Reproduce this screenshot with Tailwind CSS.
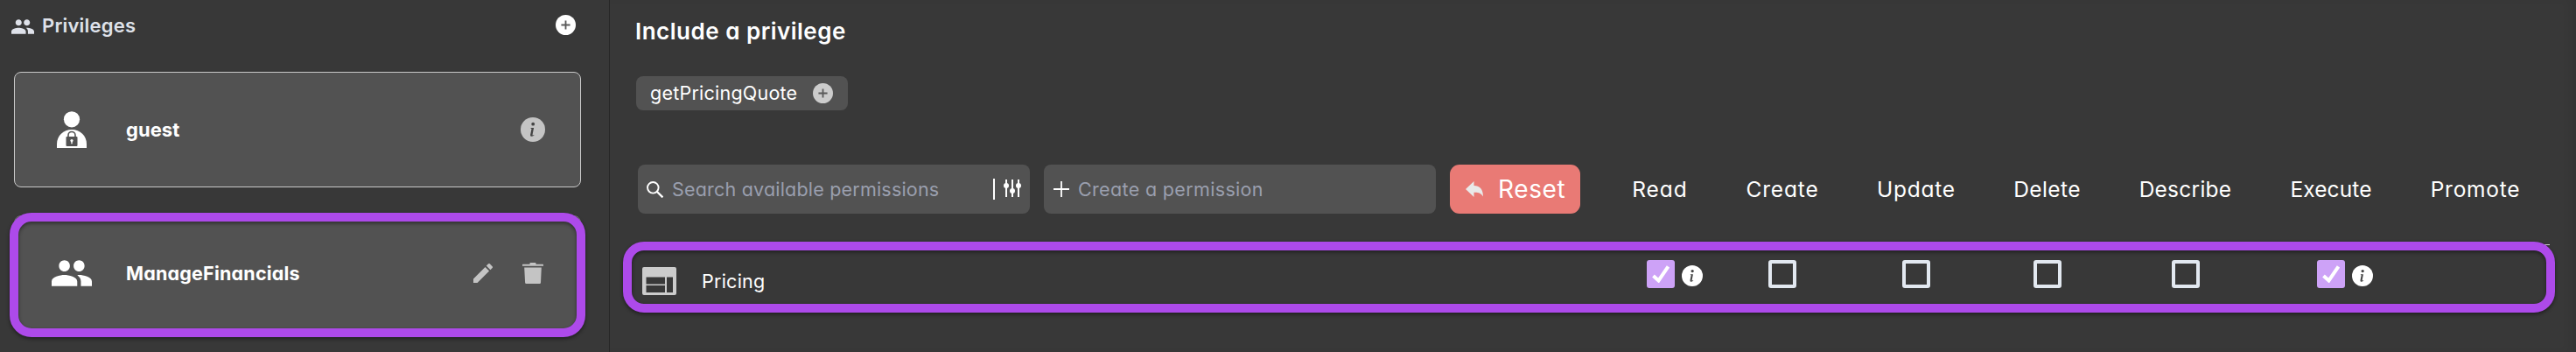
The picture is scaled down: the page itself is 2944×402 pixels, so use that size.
<!DOCTYPE html>
<html lang="en">
<head>
<meta charset="utf-8">
<title>Privileges</title>
<script src="https://cdn.jsdelivr.net/npm/@tailwindcss/browser@4"></script>
</head>
<body class="bg-[#383838] text-white font-['Inter',sans-serif] [font-feature-settings:'cv11'] whitespace-nowrap">
<svg class="hidden">
  <symbol id="people" viewBox="1 5 22 14"><path fill="currentColor" d="M16 11c1.66 0 2.99-1.34 2.99-3S17.66 5 16 5s-3 1.34-3 3 1.34 3 3 3zm-8 0c1.66 0 2.99-1.34 2.99-3S9.66 5 8 5 5 6.340 5 8s1.340 3 3 3zm0 2c-2.330 0-7 1.170-7 3.500V19h14v-2.500c0-2.330-4.670-3.500-7-3.500zm8 0c-.290 0-.620.020-.970.050 1.160.840 1.970 1.970 1.970 3.450V19h6v-2.500c0-2.330-4.670-3.500-7-3.500z"/></symbol>
  <symbol id="plus-circle" viewBox="0 0 24 24"><circle cx="12" cy="12" r="12" fill="currentColor"/><path d="M12 6.700v10.600M6.700 12h10.600" stroke="#5a5a5a" stroke-width="1.900"/></symbol>
  <symbol id="info" viewBox="0 0 28 28"><circle cx="14" cy="14" r="14" fill="currentColor"/><circle cx="14.200" cy="7.700" r="1.900" fill="#444"/><path d="M11.600 11.900h3.500l-1.500 7.600q-.2 1.100.5.900l1.200-.5v.8q-1.700 1.200-3.200 1.100-1.300-.2-1-1.900l1.400-6.900-1-.3z" fill="#444"/></symbol>
</svg>
<div class="flex h-[402px] w-[2944px] overflow-hidden">
  <aside class="w-[697px] shrink-0 border-r border-[#272727] pl-4">
    <header class="flex h-14 items-center pr-[38px]">
      <svg class="-ml-[3px] mt-[5px] h-[17px] w-[26px] text-[#dfe2ea]" preserveAspectRatio="none"><use href="#people"/></svg>
      <h2 class="ml-[9px] mt-[3px] text-[22px] font-semibold tracking-[0.200px] text-[#dfe2ea]">Privileges</h2>
      <svg class="ml-auto size-[23px]"><use href="#plus-circle"/></svg>
    </header>
    <div class="mt-[26px] flex h-[132px] w-[648px] items-center rounded-lg border border-[#c8c8c8] bg-[#525252] pl-12 pr-[40px]">
      <svg class="h-[42px] w-[34px]" viewBox="0 0 34 42"><circle cx="17" cy="9.300" r="9.100" fill="#fff"/><path d="M0 42v-4.500C0 28 7.500 21 17 21s17 7 17 16.500V42z" fill="#fff"/><path d="M13 29.500v-2a4 4 0 0 1 8 0v2" fill="none" stroke="#525252" stroke-width="1.600"/><rect x="10.500" y="29" width="13" height="11" rx="1" fill="#525252"/><circle cx="17" cy="33.600" r="1.600" fill="#fff"/><path d="M16.300 34h1.400v3.200h-1.400z" fill="#fff"/></svg>
      <span class="ml-[45px] text-[22px] font-bold tracking-[0.050px]">guest</span>
      <svg class="ml-auto size-7 text-[#c4c4c4]"><use href="#info"/></svg>
    </div>
    <div class="relative mt-8 flex h-[131px] w-[648px] items-center rounded-lg border border-[#777] bg-[#525252] pl-[42px] pr-[42px]">
      <svg class="h-[30px] w-[46px]" preserveAspectRatio="none"><use href="#people"/></svg>
      <span class="ml-[39px] mt-px text-[21.500px] font-bold tracking-[0.200px]">ManageFinancials</span>
      <svg class="ml-auto size-[22px]" viewBox="3 3 18 18"><path fill="#c4c4c4" d="M3 17.250V21h3.750L17.810 9.940l-3.750-3.750L3 17.250zM20.710 7.040a1 1 0 0 0 0-1.410l-2.340-2.340a1 1 0 0 0-1.410 0l-1.830 1.830 3.750 3.750 1.830-1.830z"/></svg>
      <svg class="ml-[34px] h-6 w-6" viewBox="0 0 24 24"><path fill="#c4c4c4" d="M8.500 1.800V.6Q8.500 0 9.200 0h5.600q.7 0 .7.600v1.200h8q.5 0 .5.700v1.300H0V2.500q0-.7.500-.7zM2.200 5.500h19.600l-.8 17.300q-.1 1.200-1.200 1.200H4.400q-1.200 0-1.300-1.200z"/></svg>
      <div class="absolute -left-[6px] -top-[4px] h-[142px] w-[658px] rounded-[25px] border-[10px] border-[#ad4aea] drop-shadow-[0_2px_2px_rgba(0,0,0,0.45)]"></div>
    </div>
  </aside>
  <main class="w-[2247px] shrink-0 pl-[31px] shadow-[inset_-10px_0_14px_-8px_rgba(0,0,0,0.12)]">
    <h1 class="-ml-[2px] flex h-[71px] items-center text-[26px] font-semibold tracking-[0.500px]">Include a privilege</h1>
    <div class="-ml-px mt-4 flex h-[39px] w-[242px] items-center rounded-lg bg-[#525252] pl-[16px] pr-[17px]">
      <span class="text-[21.500px] tracking-[0.230px]">getPricingQuote</span>
      <svg class="ml-auto size-[23px] text-[#ccc]"><use href="#plus-circle"/></svg>
    </div>
    <div class="mt-[62px] flex h-14 items-center">
      <div class="ml-px flex h-full w-[448px] items-center rounded-lg bg-[#525252] pl-[10px] pr-[10px]">
        <svg class="size-[19px]" viewBox="0 0 19 19" fill="none" stroke="#fff" stroke-width="1.900"><circle cx="7.300" cy="7.300" r="6.300"/><path d="M11.700 11.700l6.700 6.700" stroke-width="2.300"/></svg>
        <span class="ml-[10px] text-[21.500px] tracking-[0.200px] text-[#9a9fae]">Search available permissions</span>
        <i class="ml-auto h-6 w-[2px] bg-white"></i>
        <svg class="-mt-[3px] ml-[10px] h-5 w-5" viewBox="0 0 20 20" fill="#fff"><path d="M2 0h2v20H2zM9 0h2v20H9zM16 0h2v20h-2z"/><circle cx="3" cy="7" r="3"/><circle cx="10" cy="13" r="3"/><circle cx="17" cy="7" r="3"/></svg>
      </div>
      <div class="ml-4 flex h-full w-[448px] items-center rounded-lg bg-[#525252] pl-[11px]">
        <svg class="size-[18px]" viewBox="0 0 18 18"><path d="M9 0v18M0 9h18" stroke="#fff" stroke-width="1.800"/></svg>
        <span class="ml-[10px] text-[21.500px] tracking-[0.340px] text-[#9a9fae]">Create a permission</span>
      </div>
      <button class="ml-4 flex h-full w-[149px] items-center rounded-[11px] bg-[#e97a75] pl-[18px]">
        <svg class="h-[18px] w-5" viewBox="0 0 20 18"><path fill="#e9e9e9" d="M0 9L9.500 0v5C16 5 20 9 20 17.500 17.500 13.500 14.500 12.500 9.500 12.800V18z"/></svg>
        <span class="ml-[17px] text-[28px] tracking-[0.600px]">Reset</span>
      </button>
      <div class="ml-[26px] grid grid-cols-[130px_150px_156px_143px_173px_160px_170px] text-center text-[24.500px]">
        <span class="tracking-[0.950px]">Read</span><span class="tracking-[0.850px]">Create</span><span class="tracking-[0.750px]">Update</span><span class="tracking-[0.400px]">Delete</span><span class="tracking-[0.250px]">Describe</span><span class="tracking-[0.100px]">Execute</span><span class="tracking-[0.750px]">Promote</span>
      </div>
    </div>
    <div class="relative mt-[35px] flex h-[78px] w-[2186px] border-t border-[#d0d0d0]">
      <svg class="ml-[6px] mt-[25px] h-8 w-[39px]" viewBox="0 0 39 32"><path fill="#ccc" fill-rule="evenodd" d="M2 0h35q2 0 2 2v28q0 2-2 2H2q-2 0-2-2V2Q0 0 2 0zM4.500 11.500v8h21.500v-8zM4.500 21v8h21.500v-8zM28 11.500V29h7V11.500z"/></svg>
      <span class="ml-[29px] mt-[25px] h-8 text-[21.500px]/8 tracking-[0.250px]">Pricing</span>
      <div class="ml-auto mt-[17px] grid h-8 grid-cols-[130px_150px_156px_143px_173px_160px_170px]">
        <div class="flex items-center pl-[50px]"><span class="grid size-8 place-items-center rounded-[3px] bg-[#cda2f7]"><svg class="size-5" viewBox="0 0 20 20"><path d="M1.500 12l6 5.500L18.500 1.500" fill="none" stroke="#fff" stroke-width="4"/></svg></span><svg class="ml-2 mt-[4px] size-6"><use href="#info"/></svg></div>
        <div class="pl-[59px]"><span class="block size-8 rounded-[3px] border-4 border-[#e2e8f0]"></span></div>
        <div class="pl-[62px]"><span class="block size-8 rounded-[3px] border-4 border-[#e2e8f0]"></span></div>
        <div class="pl-[56px]"><span class="block size-8 rounded-[3px] border-4 border-[#e2e8f0]"></span></div>
        <div class="pl-[71px]"><span class="block size-8 rounded-[3px] border-4 border-[#e2e8f0]"></span></div>
        <div class="flex items-center pl-[64px]"><span class="grid size-8 place-items-center rounded-[3px] bg-[#cda2f7]"><svg class="size-5" viewBox="0 0 20 20"><path d="M1.500 12l6 5.500L18.500 1.500" fill="none" stroke="#fff" stroke-width="4"/></svg></span><svg class="ml-2 mt-[4px] size-6"><use href="#info"/></svg></div>
        <div></div>
      </div>
      <div class="absolute -left-[16px] -top-[4px] h-[81px] w-[2208px] rounded-[24px] border-[10px] border-[#ad4aea] drop-shadow-[0_2px_2px_rgba(0,0,0,0.45)]"></div>
    </div>
  </main>
</div>
</body>
</html>
